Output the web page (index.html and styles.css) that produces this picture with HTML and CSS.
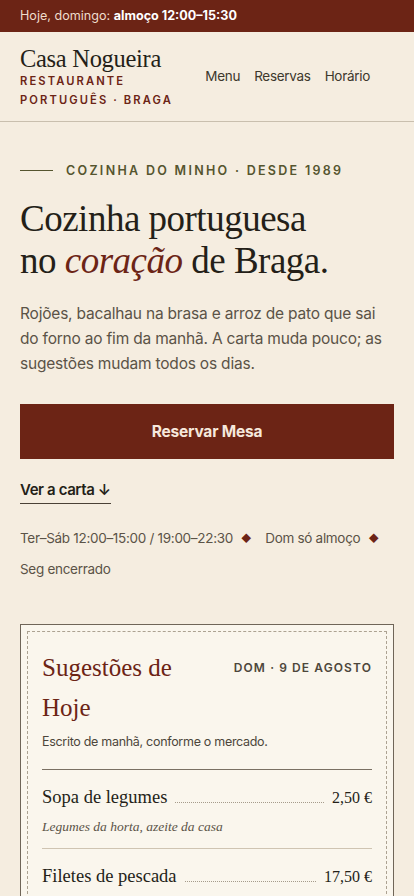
FILE: index.html
```html
<!DOCTYPE html>
<html lang="pt">
    <head>
        <meta charset="utf-8">
        <title>Casa Nogueira — Restaurante Português, Braga</title>
        <link rel="stylesheet" href="styles.css">
    </head>
    <body>
        <div class="topbar">Hoje, domingo: <strong>almoço 12:00–15:30</strong></div>

        <header class="site-header">
            <div class="brand">
                <div class="brand-name">Casa Nogueira</div>
                <div class="brand-tag">Restaurante Português · Braga</div>
            </div>
            <nav class="nav">
                <a href="#menu">Menu</a>
                <a href="#reservas">Reservas</a>
                <a href="#horario">Horário</a>
            </nav>
        </header>

        <main class="hero">
            <p class="eyebrow">Cozinha do Minho · Desde 1989</p>
            <h1 class="title">Cozinha portuguesa<br>no <em>coração</em> de Braga.</h1>
            <p class="lead">Rojões, bacalhau na brasa e arroz de pato que sai do forno ao fim da manhã. A carta muda pouco; as sugestões mudam todos os dias.</p>

            <a class="btn" href="#reservas">Reservar Mesa</a>
            <a class="more" href="#menu">Ver a carta ↓</a>

            <ul class="hours" id="horario">
                <li>Ter–Sáb 12:00–15:00 / 19:00–22:30</li>
                <li class="dot">◆</li>
                <li>Dom só almoço</li>
                <li class="dot">◆</li>
                <li>Seg encerrado</li>
            </ul>

            <!-- today's board -->
            <section class="board" id="menu">
                <div class="board-inner">
                    <div class="board-head">
                        <h2>Sugestões de Hoje</h2>
                        <span class="board-date">Dom · 9 de Agosto</span>
                    </div>
                    <p class="board-note">Escrito de manhã, conforme o mercado.</p>

                    <div class="dish">
                        <div class="dish-row">
                            <span class="dish-name">Sopa de legumes</span>
                            <span class="leader"></span>
                            <span class="dish-price">2,50 €</span>
                        </div>
                        <p class="dish-desc">Legumes da horta, azeite da casa</p>
                    </div>
                    <div class="dish">
                        <div class="dish-row">
                            <span class="dish-name">Filetes de pescada</span>
                            <span class="leader"></span>
                            <span class="dish-price">17,50 €</span>
                        </div>
                        <p class="dish-desc">Com arroz de tomate malandrinho</p>
                    </div>
                </div>
            </section>
        </main>
    </body>
</html>
```

FILE: styles.css
```css
/* palette */
:root {
    --paper: #f5ede0;
    --card: #faf6ed;
    --wine: #6c2415;
    --ink: #241f18;
    --muted: #5b5347;
    --olive: #55552f;
    --rule: #cfc4b2;
}

* {
    box-sizing: border-box;
}

body {
    margin: 0;
    background: var(--paper);
    color: var(--ink);
    font-family: Inter, "Noto Sans", sans-serif;
}

a {
    color: inherit;
    text-decoration: none;
}

/* top strip */
.topbar {
    background: var(--wine);
    color: #efdccc;
    font-size: 12.6px;
    height: 32px;
    line-height: 32px;
    padding: 0 20px;
}
.topbar strong {
    color: #fff;
    font-weight: 700;
}

/* header */
.site-header {
    display: flex;
    align-items: center;
    justify-content: space-between;
    padding: 12px 20px 11px;
    border-bottom: 1px solid #c9bfae;
}

.brand-name {
    font-family: "Liberation Serif", serif;
    font-size: 24.5px;
    line-height: 30px;
    letter-spacing: -.3px;
}

.brand-tag {
    width: 160px;
    margin-top: -2px;
    font-size: 11.2px;
    line-height: 19px;
    font-weight: 600;
    letter-spacing: 2.1px;
    text-transform: uppercase;
    color: var(--wine);
}

.nav {
    display: flex;
    gap: 14px;
    margin-right: 24px;
    margin-top: -2px;
    font-size: 13.5px;
    letter-spacing: -.3px;
    color: #3d382d;
}

/* hero */
.hero {
    padding: 41px 20px 0;
}

.eyebrow {
    display: flex;
    align-items: center;
    gap: 13px;
    margin: 0;
    font-size: 12.5px;
    font-weight: 600;
    letter-spacing: 2.3px;
    text-transform: uppercase;
    color: var(--olive);
}
.eyebrow::before {
    content: "";
    width: 33px;
    height: 1px;
    background: var(--olive);
}

.title {
    margin: 20px 0 0;
    font-family: "Liberation Serif", serif;
    font-weight: 400;
    font-size: 37px;
    line-height: 42px;
    letter-spacing: -.5px;
}
.title em {
    color: var(--wine);
}

.lead {
    margin: 19px 0 0;
    font-size: 15.5px;
    line-height: 25px;
    color: var(--muted);
    letter-spacing: -.2px;
}

.btn {
    display: block;
    margin-top: 28px;
    height: 55px;
    line-height: 55px;
    text-align: center;
    background: var(--wine);
    color: #f6e8dc;
    font-weight: 700;
    font-size: 15.5px;
    letter-spacing: -.2px;
}

.more {
    display: inline-block;
    margin-top: 21px;
    padding-bottom: 4px;
    border-bottom: 1px solid #4a4136;
    font-size: 15px;
    font-weight: 600;
    letter-spacing: -.4px;
}

.hours {
    display: flex;
    flex-wrap: wrap;
    column-gap: 8px;
    row-gap: 10px;
    list-style: none;
    margin: 24px 0 0;
    padding: 0;
    font-size: 13.5px;
    line-height: 21px;
    color: var(--muted);
    letter-spacing: -.3px;
}
.hours .dot {
    margin-right: 6px;
    color: var(--wine);
    font-size: 10px;
}

/* board */
.board {
    margin-top: 44px;
    padding: 6px;
    border: 1px solid #6f6558;
    background: var(--card);
}

.board-inner {
    border: 1px dashed #aca292;
    padding: 16px 14px 0;
}

.board-head {
    display: flex;
    justify-content: space-between;
    align-items: flex-start;
}
.board-head h2 {
    margin: 0;
    width: 150px;
    font-family: "Liberation Serif", serif;
    font-weight: 400;
    font-size: 25px;
    line-height: 40px;
    color: var(--wine);
}

.board-date {
    margin-top: 12px;
    font-size: 12px;
    font-weight: 600;
    letter-spacing: 1.1px;
    text-transform: uppercase;
    color: #4d463b;
}

.board-note {
    margin: 6px 0 0;
    padding-bottom: 20px;
    border-bottom: 1px solid #7a7063;
    font-size: 12.5px;
    color: #4d463b;
    letter-spacing: -.3px;
}

.dish {
    padding: 17px 0 13px;
    border-bottom: 1px solid var(--rule);
}

.dish-row {
    display: flex;
    align-items: baseline;
    gap: 8px;
}

.dish-name {
    font-family: "Liberation Serif", serif;
    font-size: 18.5px;
}

.leader {
    flex: 1;
    border-bottom: 1px dotted #a59b8b;
}

.dish-price {
    font-family: "Liberation Serif", serif;
    font-size: 16px;
}

.dish-desc {
    margin: 11px 0 0;
    font-family: "Liberation Serif", serif;
    font-style: italic;
    font-size: 13.5px;
    color: #5b5347;
}
```
